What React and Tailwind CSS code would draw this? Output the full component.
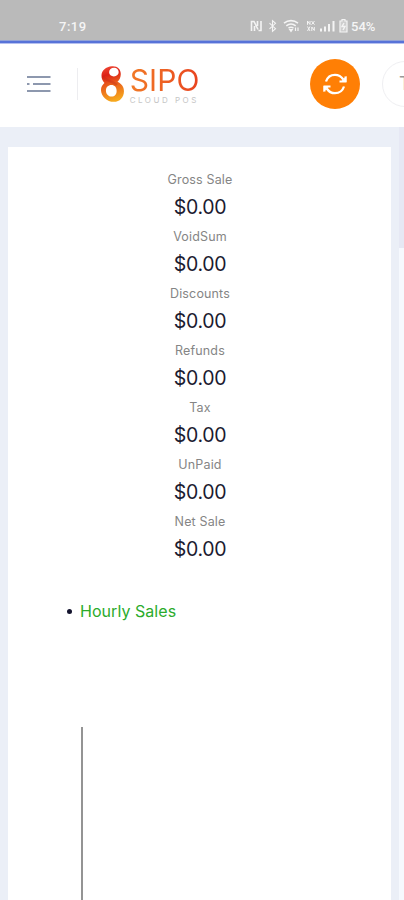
import React from 'react';

const totals = [
  { label: 'Gross Sale', value: '$0.00' },
  { label: 'VoidSum', value: '$0.00' },
  { label: 'Discounts', value: '$0.00' },
  { label: 'Refunds', value: '$0.00' },
  { label: 'Tax', value: '$0.00' },
  { label: 'UnPaid', value: '$0.00' },
  { label: 'Net Sale', value: '$0.00' },
];

const StatusIcons = () => (
  <svg width="99" height="16" viewBox="0 0 99 16" fill="none" stroke="#f4f4f4" strokeWidth="1.3">
    {/* NFC */}
    <path d="M2.500 13V3.500h2.500L9 11.500M5.500 13V8M8.500 3v5M12 3v9.500H9.500" strokeWidth="1.6" />
    {/* Bluetooth */}
    <path d="M20.500 5.200l6 5.500-3 2.600V2.700l3 2.600-6 5.500" strokeWidth="1.1" />
    {/* Wifi */}
    <path d="M35 5.200c4.200-3.400 9.800-3.400 14 0M37.300 7.800c3-2.300 6.400-2.300 9.400 0M39.500 10.200c1.800-1.300 3.200-1.300 5 0" strokeWidth="1.6" />
    <path d="M42 13.500l-1.300-2h2.600zM46.500 9.500v3.500M49 9.500v3.500" strokeWidth="1.2" />
    {/* Network type */}
    <path d="M58.500 6.800V3l2.500 3.500V3M62.500 3l3 3.700M65.500 3l-3 3.700M58.500 8.500l2.500 4.500M61 8.500L58.500 13M62.800 13V9l2.500 3.500V9" strokeWidth="1" />
    {/* Signal */}
    <path d="M72 10.500v3M76 8.500v5M80 6v7.500M84.500 3v10.500" strokeWidth="2" />
    {/* Battery */}
    <path d="M93 1.500h3V3h2v11h-7V3h2z" fill="#f4f4f4" fillOpacity="0.350" strokeWidth="1.200" />
    <path d="M95 5l-2 3.500h3L94 12" strokeWidth="1.400" />
  </svg>
);

const StatusBar = () => (
  <div className="flex h-10 items-end bg-[#bababa] pb-1.5 pl-[59px] pr-[26px] text-[#f5f5f5]">
    <span className="w-[31px] font-['Roboto',sans-serif] text-[13px] font-medium leading-[15px] tracking-[0.5px]">7:19</span>
    <div className="ml-auto flex items-center">
      <StatusIcons />
      <span className="ml-[3px] w-[27px] whitespace-nowrap font-['Roboto',sans-serif] text-[13px] font-medium leading-[15px]">54%</span>
    </div>
  </div>
);

const Logo = () => (
  <div className="flex items-start">
    <svg width="28" height="40" viewBox="0 0 28 40">
      <defs>
        <linearGradient id="mark" x1="0.2" y1="0" x2="0.4" y2="1">
          <stop offset="0" stopColor="#f04a35" />
          <stop offset="0.25" stopColor="#dd2117" />
          <stop offset="0.5" stopColor="#e8581c" />
          <stop offset="1" stopColor="#f6a81d" />
        </linearGradient>
      </defs>
      <path
        fill="url(#mark)"
        fillRule="evenodd"
        d="M12 2C17.500 1.500 21 5 21 9.800C21 13.200 19.700 15.700 17.700 17.700C21.700 19.700 24.200 22.700 24.200 27.200C24.200 33.200 20 38 14 38C7 38 1 32.500 1 26C1 23 2.500 21 4.500 19C2.500 17 1.500 14.500 1.500 11.500C1.500 6.300 6 2.500 12 2ZM14.300 3.500C11.200 3.500 9.200 5.500 9.200 8.100C9.200 10.700 11.300 12.300 14 12.300C16.900 12.300 18.900 10.600 18.900 8C18.900 5.400 16.900 3.500 14.300 3.500ZM11.500 21C8.200 21 6 23.300 6 26.500C6 30 8.400 32.700 11.800 32.700C14.800 32.700 16.800 30.200 16.800 27C16.800 23.300 14.800 21 11.500 21Z"
      />
      <path d="M3 12c1.500 5 9 4 14 9" fill="none" stroke="#c0281a" strokeOpacity="0.350" strokeWidth="2.500" />
    </svg>
    <div className="ml-0.5 w-[72px] pt-[3px]">
      <div className="h-[27px] whitespace-nowrap bg-gradient-to-r from-[#f17a27] to-[#e8401f] bg-clip-text text-[30px] leading-[27px] tracking-[0.1px] text-transparent">SIPO</div>
      <div className="mt-px h-2.5 whitespace-nowrap text-[8px] leading-[10px] tracking-[2.5px] text-[#c6c6c6]">CLOUD POS</div>
    </div>
  </div>
);

const Header = () => (
  <header className="flex h-[83px] items-center overflow-hidden bg-white pb-[3px]">
    <svg className="ml-[26px] shrink-0" width="25" height="18" viewBox="0 0 25 18" fill="none" stroke="#8d98ae" strokeWidth="2.2">
      <path d="M1 2h23.500M1 9h2.500M7 9h17.500M1 16h23.500" />
    </svg>
    <div className="ml-[26px] h-8 w-px shrink-0 bg-[#ededf0]" />
    <div className="ml-[22px] w-[101px] shrink-0">
      <Logo />
    </div>
    <button className="ml-[109px] flex size-[50px] shrink-0 items-center justify-center rounded-full bg-[#ff7f05]">
      <svg width="26" height="24" viewBox="0 0 26 24" fill="none" stroke="white" strokeWidth="2.300">
        <path d="M4 9.500C5.500 5 9 2.800 13 2.800c3.500 0 6.300 1.700 8.300 4.700M22 14.500c-1.500 4.500-5 6.700-9 6.700-3.500 0-6.300-1.700-8.300-4.700" />
        <path d="M23.500 4.500v5h-6M2.500 19.500v-5h6" strokeWidth="2" />
        <path d="M24.500 4v6h-6zM1.500 20v-6h6z" fill="white" stroke="none" />
      </svg>
    </button>
    <div className="ml-[22px] flex size-[46px] shrink-0 items-center rounded-full border border-[#efeff2] pl-4 text-lg text-[#999]">
      T
    </div>
  </header>
);

const App = () => {
  return (
    <div className="flex h-[900px] w-full flex-col overflow-hidden bg-white font-['Inter',sans-serif]">
      <StatusBar />
      <div className="h-1 shrink-0 border-y border-t-[#93a3d6] border-b-[#b5c0ef] bg-[#5773d8]" />
      <Header />
      <div className="flex min-h-0 flex-1 bg-[#ebeff7]">
        <main className="ml-2 mt-5 w-[383px] bg-white pl-px pt-[21px]">
          {totals.map((item) => (
            <div key={item.label} className="text-center">
              <div className="text-[12.5px] leading-6 tracking-[0.15px] text-[#858585]">{item.label}</div>
              <div className="h-[33px] text-[19.500px] leading-[31px] tracking-[-0.350px] text-[#1b1b30]">{item.value}</div>
            </div>
          ))}

          <ul className="mt-8 pl-[58px]">
            <li className="flex items-center gap-2 text-base leading-6 tracking-[0.05px] text-[#2bab2b]">
              <span className="size-[5px] rounded-full bg-[#14142e]" />
              Hourly Sales
            </li>
          </ul>

          {/* Chart axis */}
          <div className="ml-[72px] mt-[104px] h-[180px] w-0.5 bg-[#949494]" />
        </main>

        {/* Scrollbar */}
        <div className="ml-auto w-[5px] bg-[#f6f9fe]">
          <div className="h-[121px] bg-[#e6e8f4]" />
        </div>
      </div>
    </div>
  );
};

export default App;
